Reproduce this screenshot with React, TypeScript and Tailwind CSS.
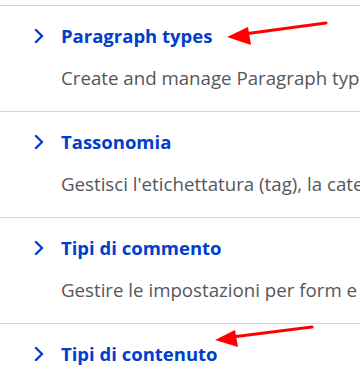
import React from "react";

const items = [
  { title: "Paragraph types", desc: "Create and manage Paragraph types." },
  { title: "Tassonomia", desc: "Gestisci l'etichettatura (tag), la categorizzazione e la classificazione dei contenuti." },
  { title: "Tipi di commento", desc: "Gestire le impostazioni per form e visualizzazione dei commenti." },
  { title: "Tipi di contenuto", desc: "Crea e gestisci campi, moduli e impostazioni." },
];

function Chevron() {
  return (
    <svg width="10" height="14" viewBox="0 0 10 14" className="shrink-0">
      <path d="M2 1 L8 7 L2 13" fill="none" stroke="#003ecc" strokeWidth="2.3" strokeLinecap="square" strokeLinejoin="miter" />
    </svg>
  );
}

export default function App() {
  return (
    <div className="relative w-[360px] h-[381px] overflow-hidden bg-white" style={{ fontFamily: '"Open Sans", "Noto Sans", sans-serif' }}>
      <div className="pt-[5px]">
        {items.map((it) => (
          <div key={it.title} className="border-t border-[#d4d4d8] pt-[18px] pb-[21px] pl-[34px]">
            <div className="flex items-center gap-[17px] h-[24px]">
              <Chevron />
              <span className="text-[18.5px] leading-[24px] font-bold text-[#003ecc] whitespace-nowrap">{it.title}</span>
            </div>
            <div className="pl-[27px] mt-[17px] text-[18.7px] leading-[25px] text-[#55565b] whitespace-nowrap">{it.desc}</div>
          </div>
        ))}
      </div>
      <svg className="absolute inset-0 pointer-events-none" width="360" height="381" viewBox="0 0 360 381">
        <line x1="326" y1="23" x2="244" y2="34" stroke="#ff0000" strokeWidth="3" strokeLinecap="round" />
        <polygon points="227,37 248,27 251,45" fill="#ff0000" />
        <line x1="312" y1="327" x2="232" y2="337" stroke="#ff0000" strokeWidth="3" strokeLinecap="round" />
        <polygon points="215,340 235,330 238,347" fill="#ff0000" />
      </svg>
    </div>
  );
}
